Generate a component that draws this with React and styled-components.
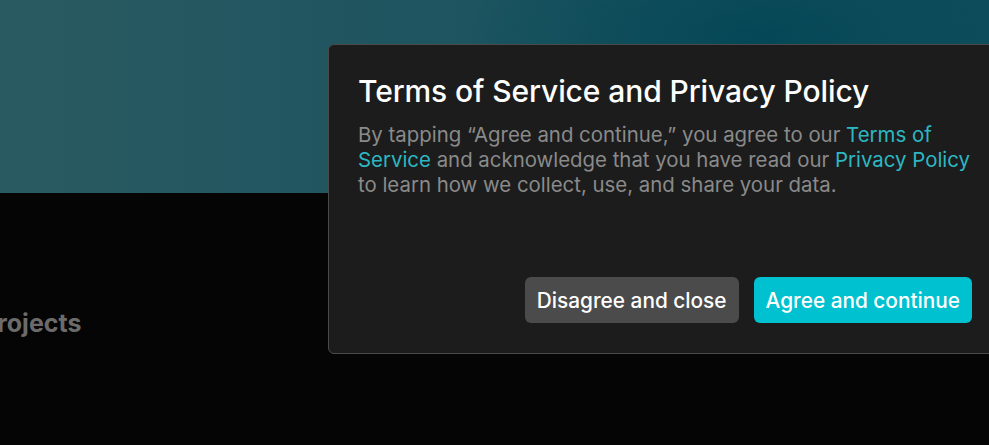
import React from "react";
import styled, { createGlobalStyle } from "styled-components";

const Global = createGlobalStyle`
  html, body { margin: 0; padding: 0; background: #050505; }
  body { font-family: Inter, "Noto Sans", sans-serif; overflow: hidden; }
  #root { width: 989px; height: 445px; }
`;

const Page = styled.div`
  position: relative;
  width: 989px;
  height: 445px;
  overflow: hidden;
  background: #050505;
  display: flex;
  flex-direction: column;
`;

const Banner = styled.div`
  height: 193px;
  flex: none;
  background:
    radial-gradient(ellipse 420px 200px at 760px 40px, rgba(4, 70, 86, 0.9), rgba(4, 70, 86, 0) 70%),
    linear-gradient(90deg, #2a5a61 0%, #1f5560 40%, #15515e 70%, #0f4e5c 100%);
`;

const Content = styled.div`
  padding-top: 115px;
`;

const SectionTitle = styled.h2`
  margin: 0 0 0 -19px;
  font-size: 25px;
  font-weight: 700;
  color: #6b6b6b;
  line-height: 30px;
`;

const Dialog = styled.div`
  position: absolute;
  left: 328px;
  top: 44px;
  width: 676px;
  height: 310px;
  box-sizing: border-box;
  padding: 26px 31px 30px 29px;
  background: #1c1c1c;
  border: 1px solid #4a4a4a;
  border-radius: 6px;
  display: flex;
  flex-direction: column;
`;

const Title = styled.h1`
  margin: 0;
  font-size: 30px;
  font-weight: 500;
  line-height: 40px;
  color: #ffffff;
  letter-spacing: -0.1px;
`;

const Body = styled.p`
  margin: 11px 0 0 0;
  font-size: 20.4px;
  line-height: 25px;
  color: #8a8a8a;
`;

const Link = styled.a`
  color: #2cb8c3;
  text-decoration: none;
`;

const Actions = styled.div`
  margin-top: auto;
  display: flex;
  justify-content: flex-end;
  gap: 15px;
`;

const Button = styled.button`
  height: 46px;
  padding: 0 12px;
  border: none;
  border-radius: 6px;
  font-family: inherit;
  font-size: 20.8px;
  font-weight: 500;
  color: #ffffff;
  background: ${(p) => (p.$primary ? "#00c1cf" : "#4b4b4b")};
`;

export default function App() {
  return (
    <>
      <Global />
      <Page>
        <Banner />
        <Content>
          <SectionTitle>Projects</SectionTitle>
        </Content>
        <Dialog>
          <Title>Terms of Service and Privacy Policy</Title>
          <Body>
            By tapping “Agree and continue,” you agree to our <Link>Terms of Service</Link> and
            acknowledge that you have read our <Link>Privacy Policy</Link> to learn how we collect,
            use, and share your data.
          </Body>
          <Actions>
            <Button>Disagree and close</Button>
            <Button $primary>Agree and continue</Button>
          </Actions>
        </Dialog>
      </Page>
    </>
  );
}
